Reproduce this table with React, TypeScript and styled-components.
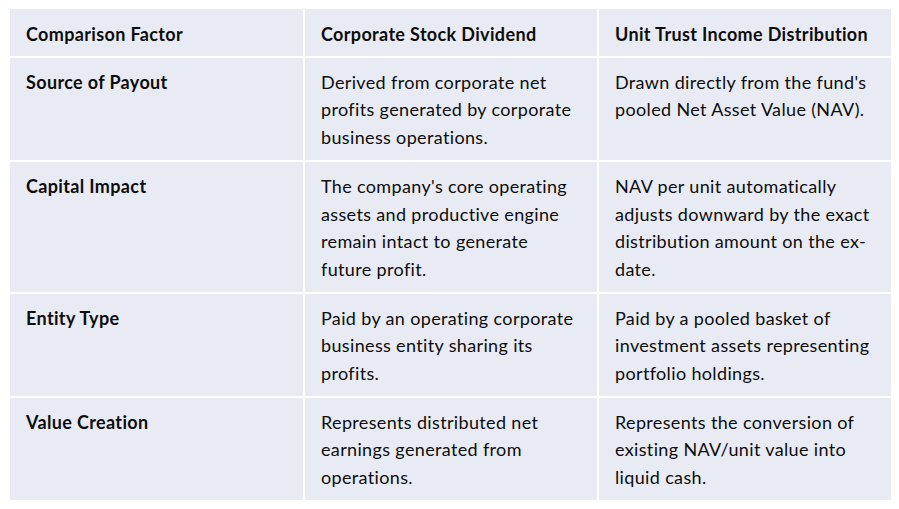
import React from 'react'
import styled, { createGlobalStyle } from 'styled-components'

const GlobalStyle = createGlobalStyle`
  html, body {
    margin: 0;
    padding: 0;
    background: #ffffff;
  }
  body {
    font-family: Lato, "Open Sans", "Liberation Sans", sans-serif;
    color: #0d0d0d;
  }
`

const Page = styled.div`
  width: 899px;
  height: 509px;
  padding: 9px 8px 0 10px;
  box-sizing: border-box;
`

const Table = styled.div`
  display: grid;
  grid-template-columns: 293px 292px 292px;
  gap: 2px;
  width: 881px;
  background: #ffffff;
`

const Cell = styled.div<{ $bold?: boolean; $head?: boolean }>`
  background: #e9ebf4;
  padding: ${(p) => (p.$head ? '12px 8px 7px 16px' : '11px 8px 8px 16px')};
  font-size: 18px;
  letter-spacing: 0.35px;
  line-height: 27.7px;
  font-weight: ${(p) => (p.$bold ? 700 : 400)};
  color: #0d0d0d;
`

const Line = styled.span`
  display: block;
  white-space: nowrap;
`

type Row = [string, string[], string[]]

const header = ['Comparison Factor', 'Corporate Stock Dividend', 'Unit Trust Income Distribution']

const rows: Row[] = [
  [
    'Source of Payout',
    ['Derived from corporate net', 'profits generated by corporate', 'business operations.'],
    ["Drawn directly from the fund's", 'pooled Net Asset Value (NAV).'],
  ],
  [
    'Capital Impact',
    ["The company's core operating", 'assets and productive engine', 'remain intact to generate', 'future profit.'],
    ['NAV per unit automatically', 'adjusts downward by the exact', 'distribution amount on the ex-', 'date.'],
  ],
  [
    'Entity Type',
    ['Paid by an operating corporate', 'business entity sharing its', 'profits.'],
    ['Paid by a pooled basket of', 'investment assets representing', 'portfolio holdings.'],
  ],
  [
    'Value Creation',
    ['Represents distributed net', 'earnings generated from', 'operations.'],
    ['Represents the conversion of', 'existing NAV/unit value into', 'liquid cash.'],
  ],
]

function Lines({ lines }: { lines: string[] }) {
  return (
    <>
      {lines.map((l) => (
        <Line key={l}>{l}</Line>
      ))}
    </>
  )
}

export default function App() {
  return (
    <>
      <GlobalStyle />
      <Page>
        <Table>
          {header.map((h) => (
            <Cell key={h} $bold $head>
              {h}
            </Cell>
          ))}
          {rows.map(([factor, stock, trust]) => (
            <React.Fragment key={factor}>
              <Cell $bold>{factor}</Cell>
              <Cell>
                <Lines lines={stock} />
              </Cell>
              <Cell>
                <Lines lines={trust} />
              </Cell>
            </React.Fragment>
          ))}
        </Table>
      </Page>
    </>
  )
}
